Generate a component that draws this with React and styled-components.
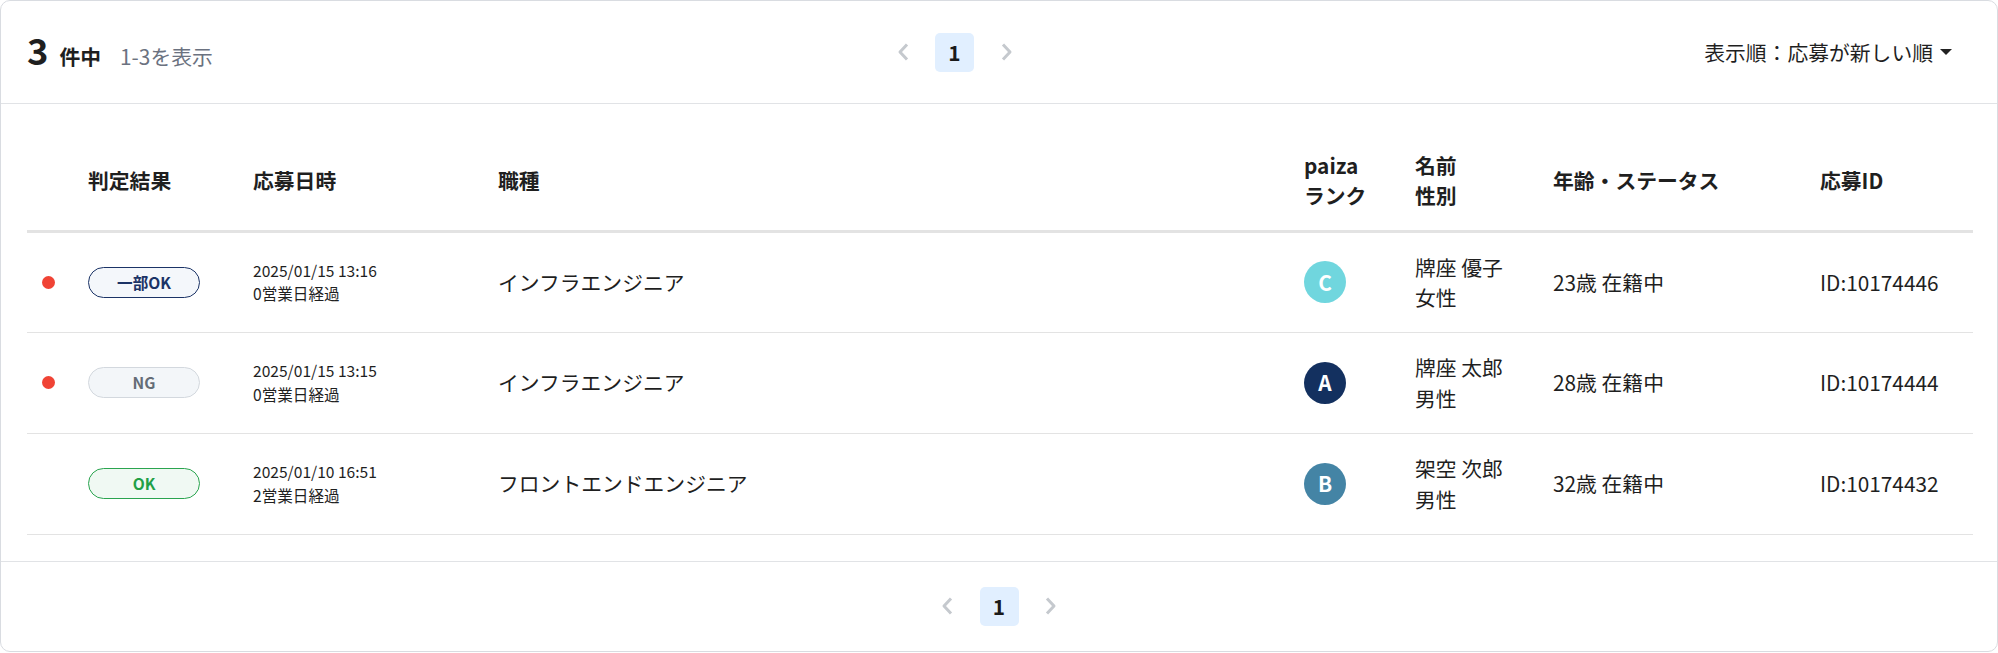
import React from "react";
import styled, { createGlobalStyle } from "styled-components";

const GlobalStyle = createGlobalStyle`
  * { box-sizing: border-box; }
  body {
    margin: 0;
    background: #fff;
    font-family: "Noto Sans CJK JP", "Noto Sans", sans-serif;
    color: #222;
  }
`;

const applicants = [
  { unread: true, result: "partial", date: "2025/01/15 13:16", days: 0, job: "インフラエンジニア", rank: "C", name: "牌座 優子", gender: "女性", age: 23, status: "在籍中", id: "10174446" },
  { unread: true, result: "ng", date: "2025/01/15 13:15", days: 0, job: "インフラエンジニア", rank: "A", name: "牌座 太郎", gender: "男性", age: 28, status: "在籍中", id: "10174444" },
  { unread: false, result: "ok", date: "2025/01/10 16:51", days: 2, job: "フロントエンドエンジニア", rank: "B", name: "架空 次郎", gender: "男性", age: 32, status: "在籍中", id: "10174432" },
];

const resultLabel = { partial: "一部OK", ng: "NG", ok: "OK" };

const rankColors = { A: "#13305f", B: "#4484a5", C: "#70d6de" };

const columns = [45, 165, 245, 806, 111, 138, 267, 169];

const Pager = () => (
  <PagerRow>
    <ArrowButton aria-label="前へ">
      <svg width="12" height="20" viewBox="0 0 12 20">
        <polyline points="10,2.5 3,10 10,17.5" fill="none" stroke="#c5c9ce" strokeWidth="3" strokeLinejoin="round" />
      </svg>
    </ArrowButton>
    <PageNumber>1</PageNumber>
    <ArrowButton aria-label="次へ">
      <svg width="12" height="20" viewBox="0 0 12 20">
        <polyline points="2,2.5 9,10 2,17.5" fill="none" stroke="#c5c9ce" strokeWidth="3" strokeLinejoin="round" />
      </svg>
    </ArrowButton>
  </PagerRow>
);

const App = () => {
  return (
    <>
      <GlobalStyle />
      <Card>
        <TopBar>
          <Summary>
            <Count>3</Count>
            <CountUnit>件中</CountUnit>
            <RangeText>1-3を表示</RangeText>
          </Summary>
          <Pager />
          <SortButton>
            表示順：応募が新しい順
            <Caret />
          </SortButton>
        </TopBar>

        <TableArea>
          <Table>
            <colgroup>
              {columns.map((w, i) => (
                <col key={i} style={{ width: w }} />
              ))}
            </colgroup>
            <thead>
              <tr>
                <Th />
                <Th>判定結果</Th>
                <Th>応募日時</Th>
                <Th>職種</Th>
                <Th>paiza<br />ランク</Th>
                <Th>名前<br />性別</Th>
                <Th>年齢・ステータス</Th>
                <Th>応募ID</Th>
              </tr>
            </thead>
            <tbody>
              {applicants.map((a) => (
                <tr key={a.id}>
                  <Td>{a.unread && <UnreadDot />}</Td>
                  <Td>
                    <ResultBadge $tone={a.result}>{resultLabel[a.result]}</ResultBadge>
                  </Td>
                  <Td>
                    <SmallText>{a.date}</SmallText>
                    <SmallText>{a.days}営業日経過</SmallText>
                  </Td>
                  <Td>{a.job}</Td>
                  <Td>
                    <RankCircle $color={rankColors[a.rank]}>{a.rank}</RankCircle>
                  </Td>
                  <Td>
                    {a.name}
                    <br />
                    {a.gender}
                  </Td>
                  <Td>
                    {a.age}歳 {a.status}
                  </Td>
                  <Td>ID:{a.id}</Td>
                </tr>
              ))}
            </tbody>
          </Table>
        </TableArea>

        <BottomBar>
          <Pager />
        </BottomBar>
      </Card>
    </>
  );
};

export default App;

const Card = styled.div`
  width: 100%;
  border: 1px solid #d9dce1;
  border-radius: 10px;
  overflow: hidden;
  background: #fff;
`;

const TopBar = styled.div`
  height: 103px;
  display: flex;
  align-items: center;
  justify-content: space-between;
  padding: 0 45px 0 26px;
  border-bottom: 1px solid #e1e3e6;
`;

const Summary = styled.div`
  display: flex;
  align-items: baseline;
  padding-bottom: 2px;
  margin-right: -8px;
`;

const Count = styled.span`
  font-size: 36.4px;
  font-weight: 700;
  line-height: 1;
  color: #1f1f1f;
`;

const CountUnit = styled.span`
  margin-left: 11px;
  font-size: 20.8px;
  font-weight: 700;
  color: #1f1f1f;
`;

const RangeText = styled.span`
  margin-left: 19px;
  font-size: 20.8px;
  color: #6b7280;
`;

const PagerRow = styled.div`
  display: flex;
  align-items: center;
  gap: 13px;
`;

const ArrowButton = styled.button`
  width: 39px;
  height: 39px;
  border: none;
  background: transparent;
  padding: 0;
  display: flex;
  align-items: center;
  justify-content: center;
  cursor: default;
`;

const PageNumber = styled.div`
  width: 39px;
  height: 39px;
  border-radius: 5px;
  background: #e1efff;
  display: flex;
  align-items: center;
  justify-content: center;
  font-size: 20.8px;
  font-weight: 700;
  color: #1a1a1a;
`;

const SortButton = styled.button`
  display: flex;
  align-items: center;
  gap: 7px;
  border: none;
  background: transparent;
  padding: 0;
  font-family: inherit;
  font-size: 20.8px;
  color: #1f1f1f;
  cursor: pointer;
`;

const Caret = styled.span`
  width: 0;
  height: 0;
  border-left: 6px solid transparent;
  border-right: 6px solid transparent;
  border-top: 6px solid #222;
`;

const TableArea = styled.div`
  padding: 26px;
`;

const Table = styled.table`
  width: 100%;
  table-layout: fixed;
  border-collapse: collapse;
`;

const Th = styled.th`
  height: 101px;
  padding: 0 16px;
  text-align: left;
  vertical-align: middle;
  font-size: 20.8px;
  font-weight: 700;
  line-height: 1.45;
  color: #1f1f1f;
  border-bottom: 3px solid #e3e3e3;
`;

const Td = styled.td`
  height: 101px;
  padding: 0 16px;
  vertical-align: middle;
  font-size: 20.8px;
  line-height: 1.45;
  color: #1f1f1f;
  border-bottom: 1px solid #e3e3e3;
`;

const UnreadDot = styled.span`
  display: block;
  width: 13px;
  height: 13px;
  margin-left: -1px;
  border-radius: 50%;
  background: #f04335;
`;

const badgeTones = {
  partial: { bg: "#f4f7fb", border: "#1b3366", color: "#1b3366" },
  ng: { bg: "#f3f6f9", border: "#d3d8de", color: "#646c76" },
  ok: { bg: "#f0f9f3", border: "#2aa44f", color: "#21a046" },
};

const ResultBadge = styled.span`
  display: flex;
  align-items: center;
  justify-content: center;
  width: 112px;
  height: 31px;
  border-radius: 16px;
  border: 1.3px solid ${(p) => badgeTones[p.$tone].border};
  background: ${(p) => badgeTones[p.$tone].bg};
  color: ${(p) => badgeTones[p.$tone].color};
  font-size: 15.6px;
  font-weight: 700;
`;

const SmallText = styled.div`
  font-size: 15.6px;
  line-height: 1.5;
`;

const RankCircle = styled.span`
  display: flex;
  align-items: center;
  justify-content: center;
  width: 42px;
  height: 42px;
  border-radius: 50%;
  background: ${(p) => p.$color};
  color: #fff;
  font-size: 20.8px;
  font-weight: 700;
`;

const BottomBar = styled.div`
  height: 90px;
  display: flex;
  align-items: center;
  justify-content: center;
  border-top: 1px solid #e1e3e6;
`;
